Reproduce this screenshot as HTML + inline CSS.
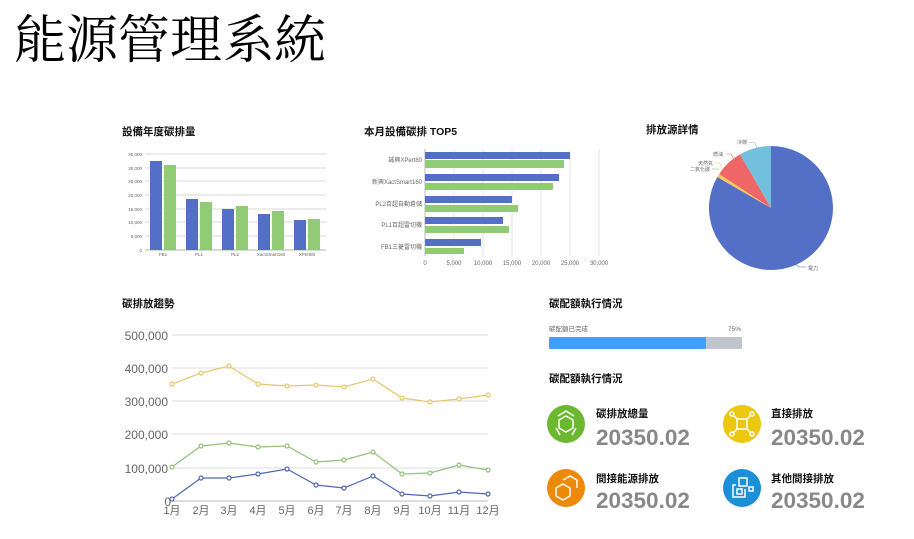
<!DOCTYPE html>
<html><head><meta charset="utf-8"><style>
html,body{margin:0;padding:0;background:#fff;width:914px;height:539px;overflow:hidden}
svg{display:block}
.t{font-family:"Liberation Sans","Noto Sans CJK TC",sans-serif;font-weight:bold;font-size:10.5px;fill:#111}
.s{font-family:"Liberation Sans","Noto Sans CJK TC",sans-serif;fill:#666}
</style></head><body>
<svg width="914" height="539" viewBox="0 0 914 539" xmlns="http://www.w3.org/2000/svg">
<text x="14" y="58" style="font-family:'Noto Serif CJK TC','Noto Serif CJK SC',serif;font-size:52px;fill:#000">能源管理系統</text>

<!-- chart 1 -->
<text class="t" x="122" y="135">設備年度碳排量</text>
<g stroke="#ccc" stroke-width="0.8">
<line x1="145" y1="154" x2="326" y2="154"/><line x1="145" y1="168" x2="326" y2="168"/><line x1="145" y1="181" x2="326" y2="181"/><line x1="145" y1="195" x2="326" y2="195"/><line x1="145" y1="209" x2="326" y2="209"/><line x1="145" y1="222" x2="326" y2="222"/><line x1="145" y1="236" x2="326" y2="236"/><line x1="145" y1="250" x2="326" y2="250" stroke="#999"/>
</g>
<g class="s" font-size="4.5" text-anchor="end">
<text x="142" y="156">35,000</text><text x="142" y="170">30,000</text><text x="142" y="183">25,000</text><text x="142" y="197">20,000</text><text x="142" y="211">15,000</text><text x="142" y="224">10,000</text><text x="142" y="238">5,000</text><text x="142" y="252">0</text>
</g>
<g fill="#5470c6"><rect x="150" y="161" width="12" height="89"/><rect x="186" y="199" width="12" height="51"/><rect x="222" y="209" width="12" height="41"/><rect x="258" y="214" width="12" height="36"/><rect x="294" y="220" width="12" height="30"/></g>
<g fill="#91cc75"><rect x="164" y="165" width="12" height="85"/><rect x="200" y="202" width="12" height="48"/><rect x="236" y="206" width="12" height="44"/><rect x="272" y="211" width="12" height="39"/><rect x="308" y="219" width="12" height="31"/></g>
<g class="s" font-size="4.5" text-anchor="middle"><text x="163" y="256">FB1</text><text x="199" y="256">PL1</text><text x="235" y="256">PL2</text><text x="271" y="256">XactSmart160</text><text x="307" y="256">XPert80</text></g>

<!-- chart 2 -->
<text class="t" x="364" y="135">本月設備碳排 TOP5</text>
<g stroke="#ddd" stroke-width="0.8"><line x1="454" y1="149" x2="454" y2="256"/><line x1="483" y1="149" x2="483" y2="256"/><line x1="512" y1="149" x2="512" y2="256"/><line x1="541" y1="149" x2="541" y2="256"/><line x1="570" y1="149" x2="570" y2="256"/><line x1="599" y1="149" x2="599" y2="256"/><line x1="425" y1="149" x2="425" y2="256" stroke="#aaa"/></g>
<g fill="#5470c6"><rect x="425" y="152" width="145" height="7"/><rect x="425" y="174" width="134" height="7"/><rect x="425" y="196" width="87" height="7"/><rect x="425" y="217" width="78" height="7"/><rect x="425" y="239" width="56" height="7"/></g>
<g fill="#91cc75"><rect x="425" y="160" width="139" height="8"/><rect x="425" y="183" width="128" height="7"/><rect x="425" y="205" width="93" height="7"/><rect x="425" y="226" width="84" height="7"/><rect x="425" y="248" width="39" height="6"/></g>
<g class="s" font-size="6" text-anchor="end"><text x="422" y="162">誠興XPert80</text><text x="422" y="184">新興XactSmart160</text><text x="422" y="206">PL2百超自動倉儲</text><text x="422" y="227">PL1百超雷切機</text><text x="422" y="249">FB1三菱雷切機</text></g>
<g class="s" font-size="6" text-anchor="middle"><text x="425" y="265">0</text><text x="454" y="265">5,000</text><text x="483" y="265">10,000</text><text x="512" y="265">15,000</text><text x="541" y="265">20,000</text><text x="570" y="265">25,000</text><text x="599" y="265">30,000</text></g>

<!-- pie -->
<text class="t" x="646" y="133">排放源詳情</text>
<g transform="translate(771,208)">
<path d="M0,0 L0,-62 A62,62 0 1 1 -53.7,-31 Z" fill="#5470c6"/>
<path d="M0,0 L-53.7,-31 A62,62 0 0 1 -51.9,-34 Z" fill="#fac858"/>
<path d="M0,0 L-51.9,-34 A62,62 0 0 1 -31,-53.7 Z" fill="#ee6666"/>
<path d="M0,0 L-31,-53.7 A62,62 0 0 1 0,-62 Z" fill="#73c0de"/>
</g>
<g fill="none" stroke-width="0.6"><path d="M748,142 L755,143 L757,148" stroke="#73c0de"/><path d="M726,154 L731,154 L734,159" stroke="#ee6666"/><path d="M714,163 L719,163 L722,168" stroke="#fac858"/><path d="M712,169 L719,169" stroke="#91cc75"/><path d="M806,267 L799,267 L795,264" stroke="#5470c6"/></g>
<g class="s" font-size="5" fill="#333"><text x="737" y="144">冷媒</text><text x="713" y="156">燃油</text><text x="698" y="165">天然氣</text><text x="690" y="171">二氧化碳</text><text x="808" y="270">電力</text></g>

<!-- line chart -->
<text class="t" x="122" y="307">碳排放趨勢</text>
<g stroke="#ddd" stroke-width="1"><line x1="172" y1="335" x2="488" y2="335"/><line x1="172" y1="368" x2="488" y2="368"/><line x1="172" y1="401" x2="488" y2="401"/><line x1="172" y1="434" x2="488" y2="434"/><line x1="172" y1="468" x2="488" y2="468"/><line x1="172" y1="501" x2="488" y2="501" stroke="#bbb"/></g>
<g class="s" font-size="12" text-anchor="end"><text x="168" y="340">500,000</text><text x="168" y="373">400,000</text><text x="168" y="406">300,000</text><text x="168" y="439">200,000</text><text x="168" y="473">100,000</text><text x="171" y="506">0</text></g>
<g class="s" font-size="11" text-anchor="middle"><text x="172" y="514">1月</text><text x="201" y="514">2月</text><text x="229" y="514">3月</text><text x="258" y="514">4月</text><text x="287" y="514">5月</text><text x="316" y="514">6月</text><text x="344" y="514">7月</text><text x="373" y="514">8月</text><text x="402" y="514">9月</text><text x="430" y="514">10月</text><text x="459" y="514">11月</text><text x="488" y="514">12月</text></g>
<g fill="#fff" stroke-width="1.2">
<polyline fill="none" stroke="#e6c76c" points="172,384 201,373 229,366 258,384 287,386 316,385 344,387 373,379 402,398 430,402 459,399 488,395"/>
<polyline fill="none" stroke="#91c279" points="172,467 201,446 229,443 258,447 287,446 316,462 344,460 373,452 402,474 430,473 459,465 488,470"/>
<polyline fill="none" stroke="#4f67b0" points="172,499 201,478 229,478 258,474 287,469 316,485 344,488 373,476 402,494 430,496 459,492 488,494"/>
<g stroke="#e6c76c"><circle cx="172" cy="384" r="2"/><circle cx="201" cy="373" r="2"/><circle cx="229" cy="366" r="2"/><circle cx="258" cy="384" r="2"/><circle cx="287" cy="386" r="2"/><circle cx="316" cy="385" r="2"/><circle cx="344" cy="387" r="2"/><circle cx="373" cy="379" r="2"/><circle cx="402" cy="398" r="2"/><circle cx="430" cy="402" r="2"/><circle cx="459" cy="399" r="2"/><circle cx="488" cy="395" r="2"/></g>
<g stroke="#91c279"><circle cx="172" cy="467" r="2"/><circle cx="201" cy="446" r="2"/><circle cx="229" cy="443" r="2"/><circle cx="258" cy="447" r="2"/><circle cx="287" cy="446" r="2"/><circle cx="316" cy="462" r="2"/><circle cx="344" cy="460" r="2"/><circle cx="373" cy="452" r="2"/><circle cx="402" cy="474" r="2"/><circle cx="430" cy="473" r="2"/><circle cx="459" cy="465" r="2"/><circle cx="488" cy="470" r="2"/></g>
<g stroke="#4f67b0"><circle cx="172" cy="499" r="2"/><circle cx="201" cy="478" r="2"/><circle cx="229" cy="478" r="2"/><circle cx="258" cy="474" r="2"/><circle cx="287" cy="469" r="2"/><circle cx="316" cy="485" r="2"/><circle cx="344" cy="488" r="2"/><circle cx="373" cy="476" r="2"/><circle cx="402" cy="494" r="2"/><circle cx="430" cy="496" r="2"/><circle cx="459" cy="492" r="2"/><circle cx="488" cy="494" r="2"/></g>
</g>

<!-- progress -->
<text class="t" x="549" y="307">碳配額執行情況</text>
<text class="s" x="549" y="331" font-size="6.5" fill="#444">碳配額已完成</text>
<text class="s" x="741" y="331" font-size="6.5" fill="#444" text-anchor="end">75%</text>
<rect x="549" y="337" width="193" height="12" rx="1.5" fill="#c0c4cc"/>
<rect x="549" y="337" width="157" height="12" rx="1.5" fill="#409eff"/>
<text class="t" x="549" y="382">碳配額執行情況</text>

<!-- stats -->
<circle cx="566" cy="424" r="19" fill="#6cb931"/>
<g fill="none" stroke="#fff" stroke-width="1.5"><path d="M566,416 L573,420 L573,428 L566,432 L559,428 L559,420 Z"/><path d="M558,416 L566,411 L574,416 M576,428 L572,435 M556,428 L560,435" /></g>
<circle cx="742" cy="424" r="19" fill="#ebc70f"/>
<g fill="none" stroke="#fff" stroke-width="1.5"><rect x="737" y="419" width="10" height="10"/><path d="M737,419 L733,415 M747,419 L751,415 M737,429 L733,433 M747,429 L751,433"/><circle cx="732" cy="414" r="2"/><circle cx="752" cy="414" r="2"/><circle cx="732" cy="434" r="2"/><circle cx="752" cy="434" r="2"/></g>
<circle cx="566" cy="488" r="19" fill="#ee8a0a"/>
<g fill="none" stroke="#fff" stroke-width="1.5"><path d="M563,484 L570,488 L570,496 L563,500 L556,496 L556,488 Z"/><path d="M563,480 L570,476 L577,480 L577,488"/></g>
<circle cx="742" cy="488" r="19" fill="#1b8fd8"/>
<g fill="none" stroke="#fff" stroke-width="1.5"><rect x="739" y="478" width="8" height="8"/><path d="M736,485 L733,485 L733,497 L745,497 L745,489"/><rect x="737" y="489" width="5" height="5"/><rect x="749" y="487" width="4" height="4"/></g>

<g class="t" font-size="11"><text x="596" y="417">碳排放總量</text><text x="771" y="417">直接排放</text><text x="596" y="482">間接能源排放</text><text x="771" y="482">其他間接排放</text></g>
<g font-family="Liberation Sans,sans-serif" font-weight="bold" font-size="22.5" fill="#888"><text x="596" y="445">20350.02</text><text x="771" y="445">20350.02</text><text x="596" y="508">20350.02</text><text x="771" y="508">20350.02</text></g>
</svg>
</body></html>
